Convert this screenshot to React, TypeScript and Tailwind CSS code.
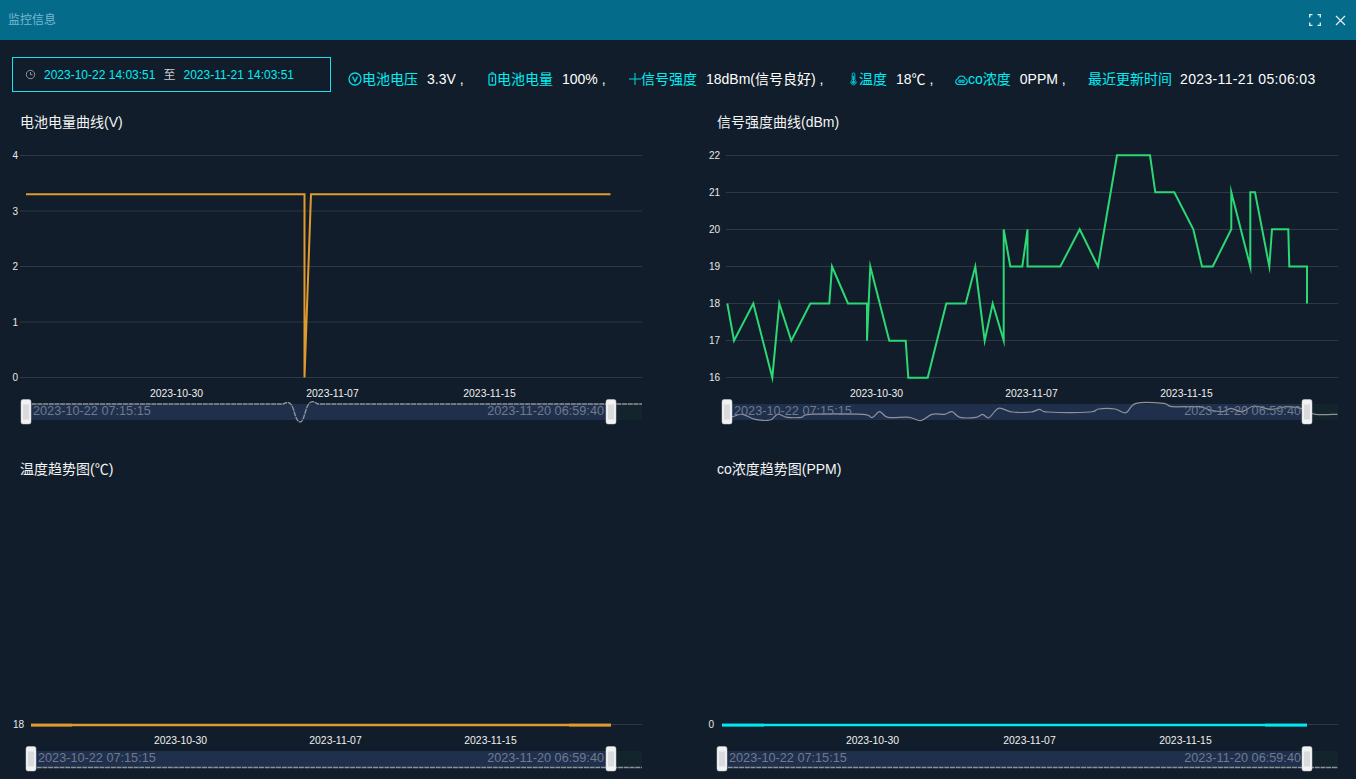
import React from 'react';

const FONT = '"Liberation Sans", "Noto Sans CJK SC", sans-serif';

const signal = [
  [727.3, 303.5], [734, 340.7], [753.3, 303.5], [772.3, 377.7], [779.3, 303.5], [791.3, 340.7], [810.3, 303.5],
  [829.3, 303.5], [832, 266.5], [848, 303.5], [867, 303.5], [867, 340.7], [870.3, 266.5], [889.3, 340.7],
  [905.7, 340.7], [908.3, 377.7], [927.7, 377.7], [946.3, 303.5], [965.7, 303.5], [975.3, 266.5], [984.7, 340.7],
  [992.7, 303.5], [1003.7, 340.7], [1003.7, 229.3], [1010.3, 266.5], [1022.3, 266.5], [1027.5, 229.3],
  [1027.5, 266.5], [1060.3, 266.5], [1079.7, 229.3], [1098, 266.5], [1117, 155.3], [1150, 155.3], [1155.3, 192.3],
  [1174.3, 192.3], [1193.3, 229.3], [1202, 266.5], [1212.7, 266.5], [1231.3, 229.3], [1231.3, 192.3],
  [1250.3, 266.5], [1250.3, 192.3], [1255, 192.3], [1269.3, 266.5], [1272, 229.3], [1288.3, 229.3],
  [1289.3, 266.5], [1307, 266.5], [1307, 303.5],
];

const signalOverview = [
  [727, 416], [732, 416.7], [742.6, 414.3], [755, 419.3], [770, 420], [777.6, 414.3], [787, 417.3], [801.6, 417.3],
  [810, 414.3], [862.6, 414.3], [872, 417.7], [879.5, 411.7], [888, 417.3], [909, 417.3], [920.7, 420.7],
  [932, 414.3], [944.7, 414.3], [952, 411.7], [960, 417.3], [976, 417.3], [982.6, 414.3], [989, 417.7],
  [998.6, 408.3], [1012, 412], [1031, 412], [1039.5, 409.3], [1048, 412], [1090, 412], [1098.4, 409], [1115, 409],
  [1126, 412.7], [1136, 403.3], [1163.7, 403.3], [1172, 406.7], [1199.5, 406.7], [1210, 410], [1222.6, 411.7],
  [1231, 408.3], [1241.6, 411.7], [1254, 406], [1271, 409.3], [1288, 406.7], [1305, 409.3], [1315, 414.3],
  [1337.6, 414.3],
];

const toLine = (pts: number[][]) => pts.map((p) => p.join(',')).join(' ');

// catmull-rom, the overview lines in the picture are smoothed
function toCurve(pts: number[][]) {
  let d = `M${pts[0][0]} ${pts[0][1]}`;
  for (let i = 0; i < pts.length - 1; i++) {
    const a = pts[Math.max(i - 1, 0)];
    const b = pts[i];
    const c = pts[i + 1];
    const e = pts[Math.min(i + 2, pts.length - 1)];
    const c1 = [b[0] + (c[0] - a[0]) / 6, b[1] + (c[1] - a[1]) / 6];
    const c2 = [c[0] - (e[0] - b[0]) / 6, c[1] - (e[1] - b[1]) / 6];
    d += `C${c1[0]} ${c1[1]} ${c2[0]} ${c2[1]} ${c[0]} ${c[1]}`;
  }
  return d;
}

function Handle({ x, y }: { x: number; y: number }) {
  return (
    <g>
      <rect x={x - 5} y={y} width={10} height={24.5} rx={2} fill="#f2f2f2" stroke="#c9ccd1" strokeWidth={0.5} />
      <path d={`M${x - 2} ${y + 5}v15M${x} ${y + 5}v15M${x + 2} ${y + 5}v15`} stroke="#b4b8bd" strokeWidth={0.8} />
    </g>
  );
}

type ChartProps = {
  box: string;
  height: number;
  grid: { label: string; y: number }[];
  gridFrom: number;
  gridTo: number;
  labelX: number;
  dates: number[];
  dateY: number;
  bandFrom: number;
  bandTo: number;
  bandY: number;
  startX: number;
  endX: number;
  handleY: number;
  children: React.ReactNode;
};

function Chart(p: ChartProps) {
  const names = ['2023-10-30', '2023-11-07', '2023-11-15'];
  const textY = p.bandY + 11;
  return (
    <svg width={660} height={p.height} viewBox={p.box} className="block" style={{ fontFamily: FONT }}>
      {p.grid.map((g) => (
        <g key={g.y}>
          <line x1={p.gridFrom} x2={p.gridTo} y1={g.y} y2={g.y} stroke="#2e3945" />
          <text x={p.labelX} y={g.y + 3.5} textAnchor="end" fontSize={10} fill="#e6e8ea">
            {g.label}
          </text>
        </g>
      ))}
      {p.dates.map((x, i) => (
        <text key={x} x={x} y={p.dateY} textAnchor="middle" fontSize={10.4} fill="#f0f0f0" fontWeight={500}>
          {names[i]}
        </text>
      ))}
      <rect x={p.bandFrom} y={p.bandY} width={p.bandTo - p.bandFrom} height={16} fill="#20304c" />
      <rect x={p.bandTo} y={p.bandY} width={p.gridTo - p.bandTo} height={16} fill="#14242c" />
      {p.children}
      <text x={p.startX} y={textY} fontSize={12.7} fill="#6e7b8e">
        2023-10-22 07:15:15
      </text>
      <text x={p.endX} y={textY} fontSize={12.7} fill="#6e7b8e" textAnchor="end">
        2023-11-20 06:59:40
      </text>
      <Handle x={p.bandFrom} y={p.handleY} />
      <Handle x={p.bandTo} y={p.handleY} />
    </svg>
  );
}

function Panel({ title, width, pad, children }: { title: string; width: string; pad: string; children: React.ReactNode }) {
  return (
    <div className={width}>
      <div className={`flex h-[30px] items-center text-sm text-[#f2f4f6] ${pad}`}>{title}</div>
      {children}
    </div>
  );
}

function Stat({ icon, label, value, className, valueClass }: { icon?: React.ReactNode; label: string; value: string; className: string; valueClass?: string }) {
  return (
    <div className={`flex items-center whitespace-nowrap ${className}`}>
      {icon}
      <span className="text-[#00eef5]">{label}</span>
      <span className={`text-white ${valueClass ?? 'ml-[9px]'}`}>{value}</span>
    </div>
  );
}

const iconProps = { fill: 'none', stroke: '#00dbe6', strokeWidth: 1.3 };

export default function App() {
  return (
    <div className="flex h-[779px] w-[1356px] flex-col overflow-hidden bg-[#111d2a]" style={{ fontFamily: FONT }}>
      <header className="flex h-10 shrink-0 items-center justify-between bg-[#056b8a] pl-2 pr-[10px]">
        <span className="text-xs text-[#79b8d2]">监控信息</span>
        <div className="flex items-center gap-[14px]">
          <svg width="12" height="12" viewBox="0 0 12 12" fill="none" stroke="#e6f0f4" strokeWidth="1.3">
            <path d="M.7 3.5V.7h2.8M8.5.7h2.8v2.8M11.3 8.5v2.8H8.5M3.5 11.3H.7V8.5" />
          </svg>
          <svg width="11" height="11" viewBox="0 0 11 11" fill="none" stroke="#e6f0f4" strokeWidth="1.2">
            <path d="M1 1l9 9M10 1l-9 9" />
          </svg>
        </div>
      </header>

      <div className="flex h-[67px] shrink-0 items-start pl-3 pt-[17px] text-sm">
        <div className="flex h-[35px] w-[319px] items-center border border-[#17e3ee] pl-[12px] text-xs">
          <svg width="11" height="11" viewBox="0 0 11 11" fill="none" stroke="#9a9fa5" strokeWidth="0.9">
            <circle cx="5.5" cy="5.5" r="4.2" />
            <path d="M5.5 3v2.7h2" />
          </svg>
          <span className="ml-[8px] text-[#00eef5]">2023-10-22 14:03:51</span>
          <span className="ml-[8px] text-[#c9ced3]">至</span>
          <span className="ml-[8px] text-[#00eef5]">2023-11-21 14:03:51</span>
        </div>

        <div className="ml-[17px] mt-[13px] flex h-[18px] items-center">
          <Stat
            className="w-[140px]"
            label="电池电压"
            value="3.3V ,"
            icon={
              <svg width="14" height="14" viewBox="0 0 14 14" {...iconProps}>
                <circle cx="7" cy="7" r="6" />
                <path d="M4.6 4.6L7 9.6l2.4-5" />
              </svg>
            }
          />
          <Stat
            className="w-[141px]"
            label="电池电量"
            value="100% ,"
            icon={
              <svg width="9" height="14" viewBox="0 0 9 14" {...iconProps}>
                <rect x="1" y="2.2" width="6.6" height="10.8" rx="1" />
                <path d="M2.8.8h3M4.3 5v5" />
              </svg>
            }
          />
          <Stat
            className="w-[219px]"
            label="信号强度"
            value="18dBm(信号良好) ,"
            icon={
              <svg width="12" height="12" viewBox="0 0 12 12" fill="none" stroke="#00dbe6" strokeWidth="1">
                <path d="M0 6h12M6 0v12" />
              </svg>
            }
          />
          <Stat
            className="w-[107px]"
            label="温度"
            value="18℃ ,"
            icon={
              <svg width="11" height="14" viewBox="0 0 11 14" fill="none" stroke="#00c8d2" strokeWidth="1">
                <path d="M4.2 8V2.2a1.3 1.3 0 012.6 0V8a2.6 2.6 0 11-2.6 0z" />
                <circle cx="5.5" cy="10.3" r="1.2" fill="#00c8d2" />
                <path d="M5.5 4v5" />
              </svg>
            }
          />
          <Stat
            className="w-[133px]"
            label="co浓度"
            value="0PPM ,"
            icon={
              <svg width="13" height="13" viewBox="0 0 13 13" {...iconProps} strokeWidth={1.1}>
                <path d="M3.4 11.5a2.9 2.9 0 01-.5-5.7 3.7 3.7 0 017.2 0 2.9 2.9 0 01-.5 5.7z" />
                <circle cx="5" cy="8.2" r="1.2" />
                <circle cx="8" cy="8.2" r="1.2" />
              </svg>
            }
          />
          <Stat className="" label="最近更新时间" value="2023-11-21 05:06:03" valueClass="ml-2 tracking-[0.35px]" />
        </div>
      </div>

      <div className="flex flex-wrap">
        <Panel title="电池电量曲线(V)" width="w-[696px]" pad="pl-5">
          <Chart
            box="0 137 660 317"
            height={317}
            grid={[
              { label: '4', y: 155.5 },
              { label: '3', y: 211 },
              { label: '2', y: 266.5 },
              { label: '1', y: 322 },
              { label: '0', y: 377.5 },
            ]}
            gridFrom={20}
            gridTo={642}
            labelX={18}
            dates={[176.5, 332.5, 489.5]}
            dateY={396.5}
            bandFrom={26}
            bandTo={611}
            bandY={404}
            startX={33}
            endX={604}
            handleY={399.5}
          >
            <path
              d="M26 404H283C289 401 291 402 294 411C296 419 298 422 300 422C303 422 304 416 306 410C308 403 311 401 314 402L318 404H642"
              fill="none"
              stroke="#8d9299"
              strokeWidth={1.4}
              strokeDasharray="5 0.7"
            />
            <polyline points="26,194.2 304.5,194.2 304.5,377.5 311,194.2 610.5,194.2" fill="none" stroke="#e09a2e" strokeWidth={2} strokeMiterlimit={10} />
          </Chart>
        </Panel>
        <Panel title="信号强度曲线(dBm)" width="w-[660px]" pad="pl-[21px]">
          <Chart
            box="696 137 660 317"
            height={317}
            grid={[
              { label: '22', y: 155.5 },
              { label: '21', y: 192.5 },
              { label: '20', y: 229.5 },
              { label: '19', y: 266.5 },
              { label: '18', y: 303.5 },
              { label: '17', y: 340.5 },
              { label: '16', y: 377.5 },
            ]}
            gridFrom={726}
            gridTo={1338}
            labelX={720}
            dates={[876.5, 1031.5, 1186.5]}
            dateY={396.5}
            bandFrom={727}
            bandTo={1307}
            bandY={404}
            startX={734}
            endX={1301}
            handleY={399.5}
          >
            <path d={toCurve(signalOverview)} fill="none" stroke="#8d9299" strokeWidth={1.2} />
            <polyline points={toLine(signal)} fill="none" stroke="#2bd873" strokeWidth={2} strokeMiterlimit={10} />
          </Chart>
        </Panel>
        <Panel title="温度趋势图(℃)" width="w-[696px]" pad="pl-5">
          <Chart
            box="0 484 660 295"
            height={295}
            grid={[{ label: '18', y: 724.5 }]}
            gridFrom={31}
            gridTo={642}
            labelX={24}
            dates={[180.5, 335.5, 490.5]}
            dateY={744}
            bandFrom={31}
            bandTo={611}
            bandY={751}
            startX={38}
            endX={604}
            handleY={746.5}
          >
            <line x1={31} x2={642} y1={767.5} y2={767.5} stroke="#8d9299" strokeWidth={1.4} strokeDasharray="5 0.7" />
            <line x1={31} x2={611} y1={725} y2={725} stroke="#e09a2e" strokeWidth={2.4} />
            <path d="M31 725.2H72M569 725.2H611" stroke="#e09a2e" strokeWidth={2.8} />
          </Chart>
        </Panel>
        <Panel title="co浓度趋势图(PPM)" width="w-[660px]" pad="pl-[21px]">
          <Chart
            box="696 484 660 295"
            height={295}
            grid={[{ label: '0', y: 724.5 }]}
            gridFrom={722}
            gridTo={1338}
            labelX={714}
            dates={[872.5, 1029.5, 1185.5]}
            dateY={744}
            bandFrom={722}
            bandTo={1307}
            bandY={751}
            startX={729}
            endX={1301}
            handleY={746.5}
          >
            <line x1={722} x2={1338} y1={767.5} y2={767.5} stroke="#8d9299" strokeWidth={1.4} strokeDasharray="5 0.7" />
            <line x1={722} x2={1307} y1={725} y2={725} stroke="#00e8f0" strokeWidth={2.4} />
            <path d="M722 725.2H764M1265 725.2H1307" stroke="#00e8f0" strokeWidth={2.8} />
          </Chart>
        </Panel>
      </div>
    </div>
  );
}
